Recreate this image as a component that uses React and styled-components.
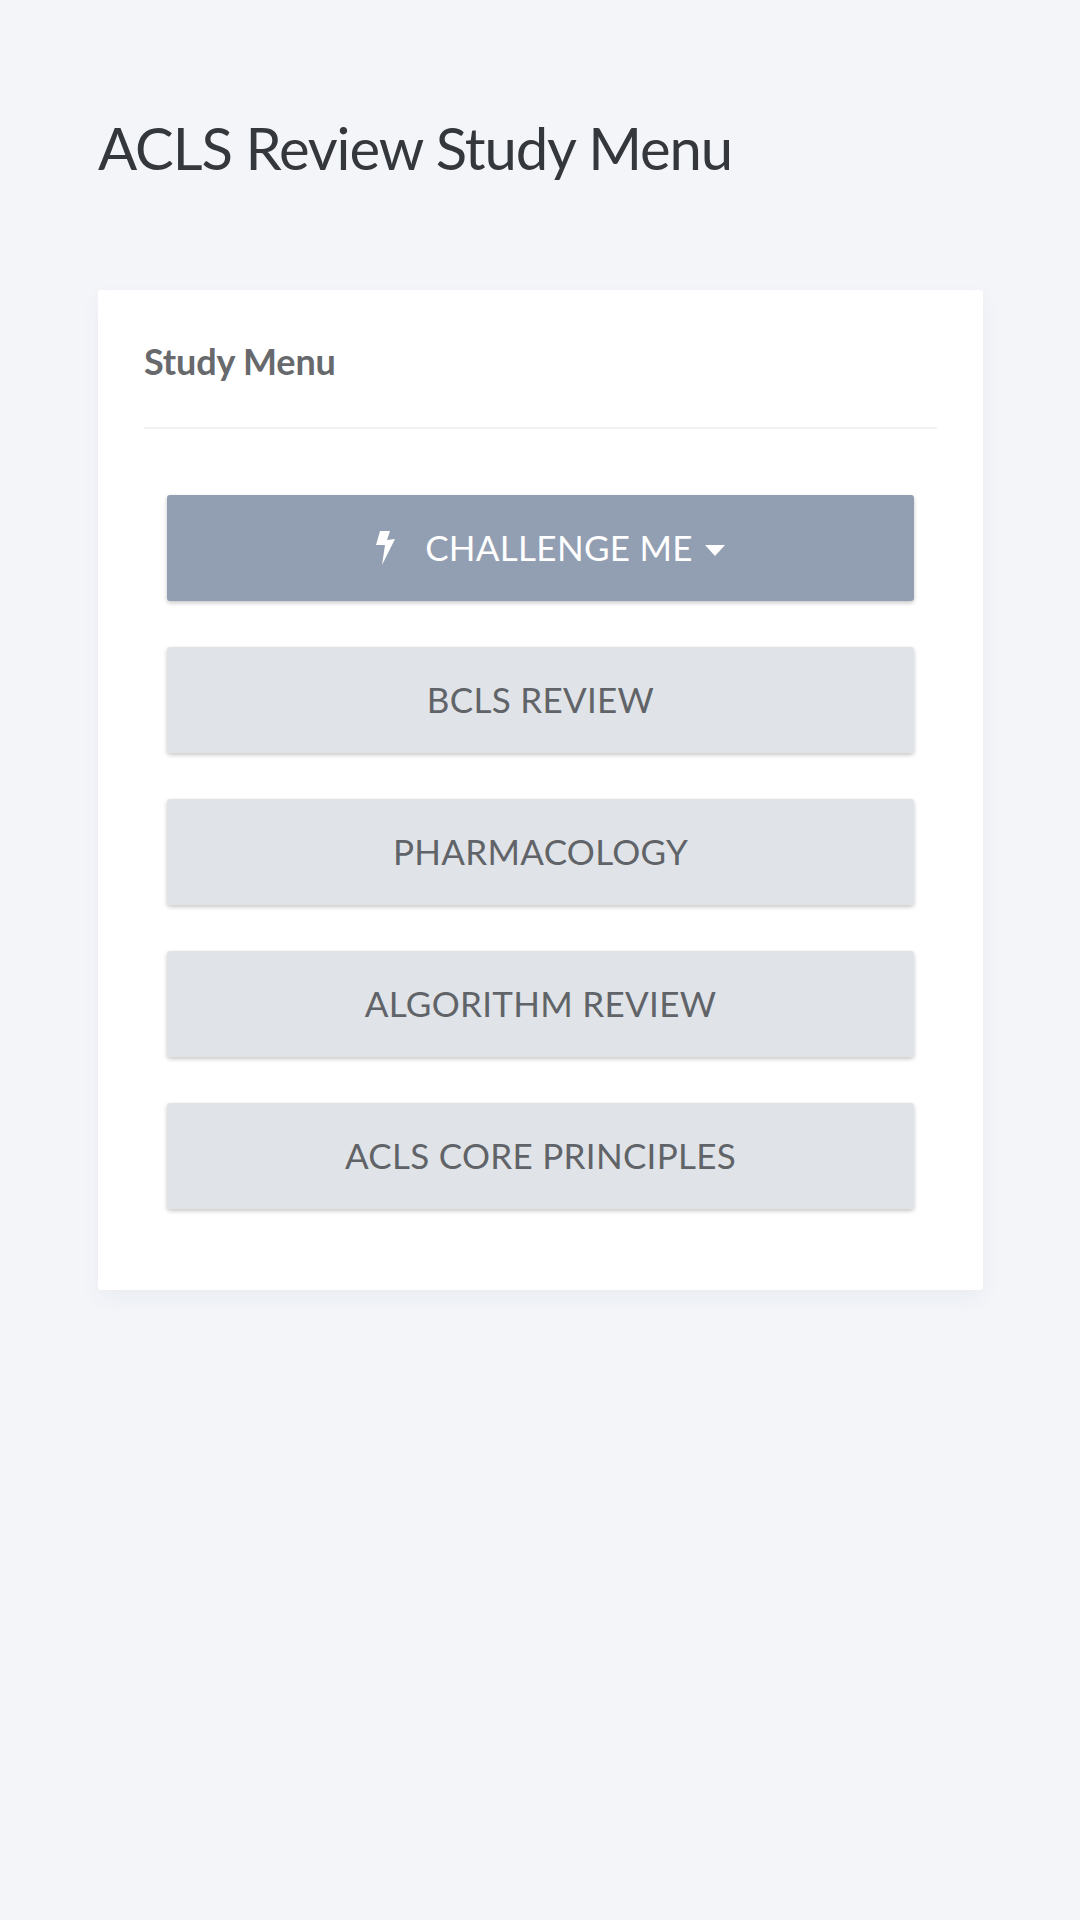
import React from "react";
import styled, { createGlobalStyle } from "styled-components";

const GlobalStyle = createGlobalStyle`
  html, body {
    margin: 0;
    padding: 0;
    background: #f3f5f9;
  }
  body {
    font-family: "Lato", "Noto Sans", sans-serif;
  }
`;

const Page = styled.div`
  min-height: 1920px;
  box-sizing: border-box;
  padding: 110px 97px 0 98px;
`;

const Title = styled.h1`
  margin: 0;
  height: 180px;
  font-size: 58px;
  line-height: 76px;
  font-weight: 400;
  color: #34373b;
  letter-spacing: -1.1px;
`;

const Card = styled.section`
  box-sizing: border-box;
  height: 1000px;
  padding: 0 46px;
  background: #fff;
  border-radius: 3px;
  box-shadow: 0 8px 20px rgba(60, 70, 90, 0.05);
`;

const CardHeader = styled.div`
  height: 139px;
  box-sizing: border-box;
  padding-top: 50px;
  border-bottom: 2px solid #f1f2f4;
  font-size: 36px;
  line-height: 42px;
  font-weight: 700;
  color: #67696c;
  letter-spacing: -0.15px;
`;

const MenuList = styled.div`
  display: flex;
  flex-direction: column;
  gap: 46px;
  padding: 66px 23px 0;
`;

const MenuButton = styled.button`
  display: flex;
  align-items: center;
  justify-content: center;
  height: 106px;
  padding: 0 0 3px;
  border: 0;
  border-radius: 3px;
  font-family: inherit;
  font-size: 35px;
  letter-spacing: 0.3px;
  background: ${(props) => (props.primary ? "#929eb2" : "#e0e3e7")};
  color: ${(props) => (props.primary ? "#fff" : "#606367")};
  box-shadow: 0 2px 4px rgba(0, 0, 0, 0.22);
`;

const IconBox = styled.span`
  display: flex;
  justify-content: center;
  width: 55px;
  box-sizing: border-box;
  padding-left: 4px;
  margin: 2px 14px 0 0;
`;

const Caret = styled.span`
  width: 0;
  height: 0;
  margin-left: 12px;
  margin-top: 8px;
  border-left: 10px solid transparent;
  border-right: 10px solid transparent;
  border-top: 11px solid #fff;
`;

const Bolt = () => (
  <svg width="19" height="34" viewBox="0 0 19 34" fill="#fff">
    <polygon points="4,0 14,0 11,9 19,8 6,34 9,14 0,14" />
  </svg>
);

const items = ["BCLS REVIEW", "PHARMACOLOGY", "ALGORITHM REVIEW", "ACLS CORE PRINCIPLES"];

const App = () => (
  <Page>
    <GlobalStyle />
    <Title>ACLS Review Study Menu</Title>
    <Card>
      <CardHeader>Study Menu</CardHeader>
      <MenuList>
        <MenuButton primary>
          <IconBox>
            <Bolt />
          </IconBox>
          CHALLENGE ME
          <Caret />
        </MenuButton>
        {items.map((item) => (
          <MenuButton key={item}>{item}</MenuButton>
        ))}
      </MenuList>
    </Card>
  </Page>
);

export default App;
